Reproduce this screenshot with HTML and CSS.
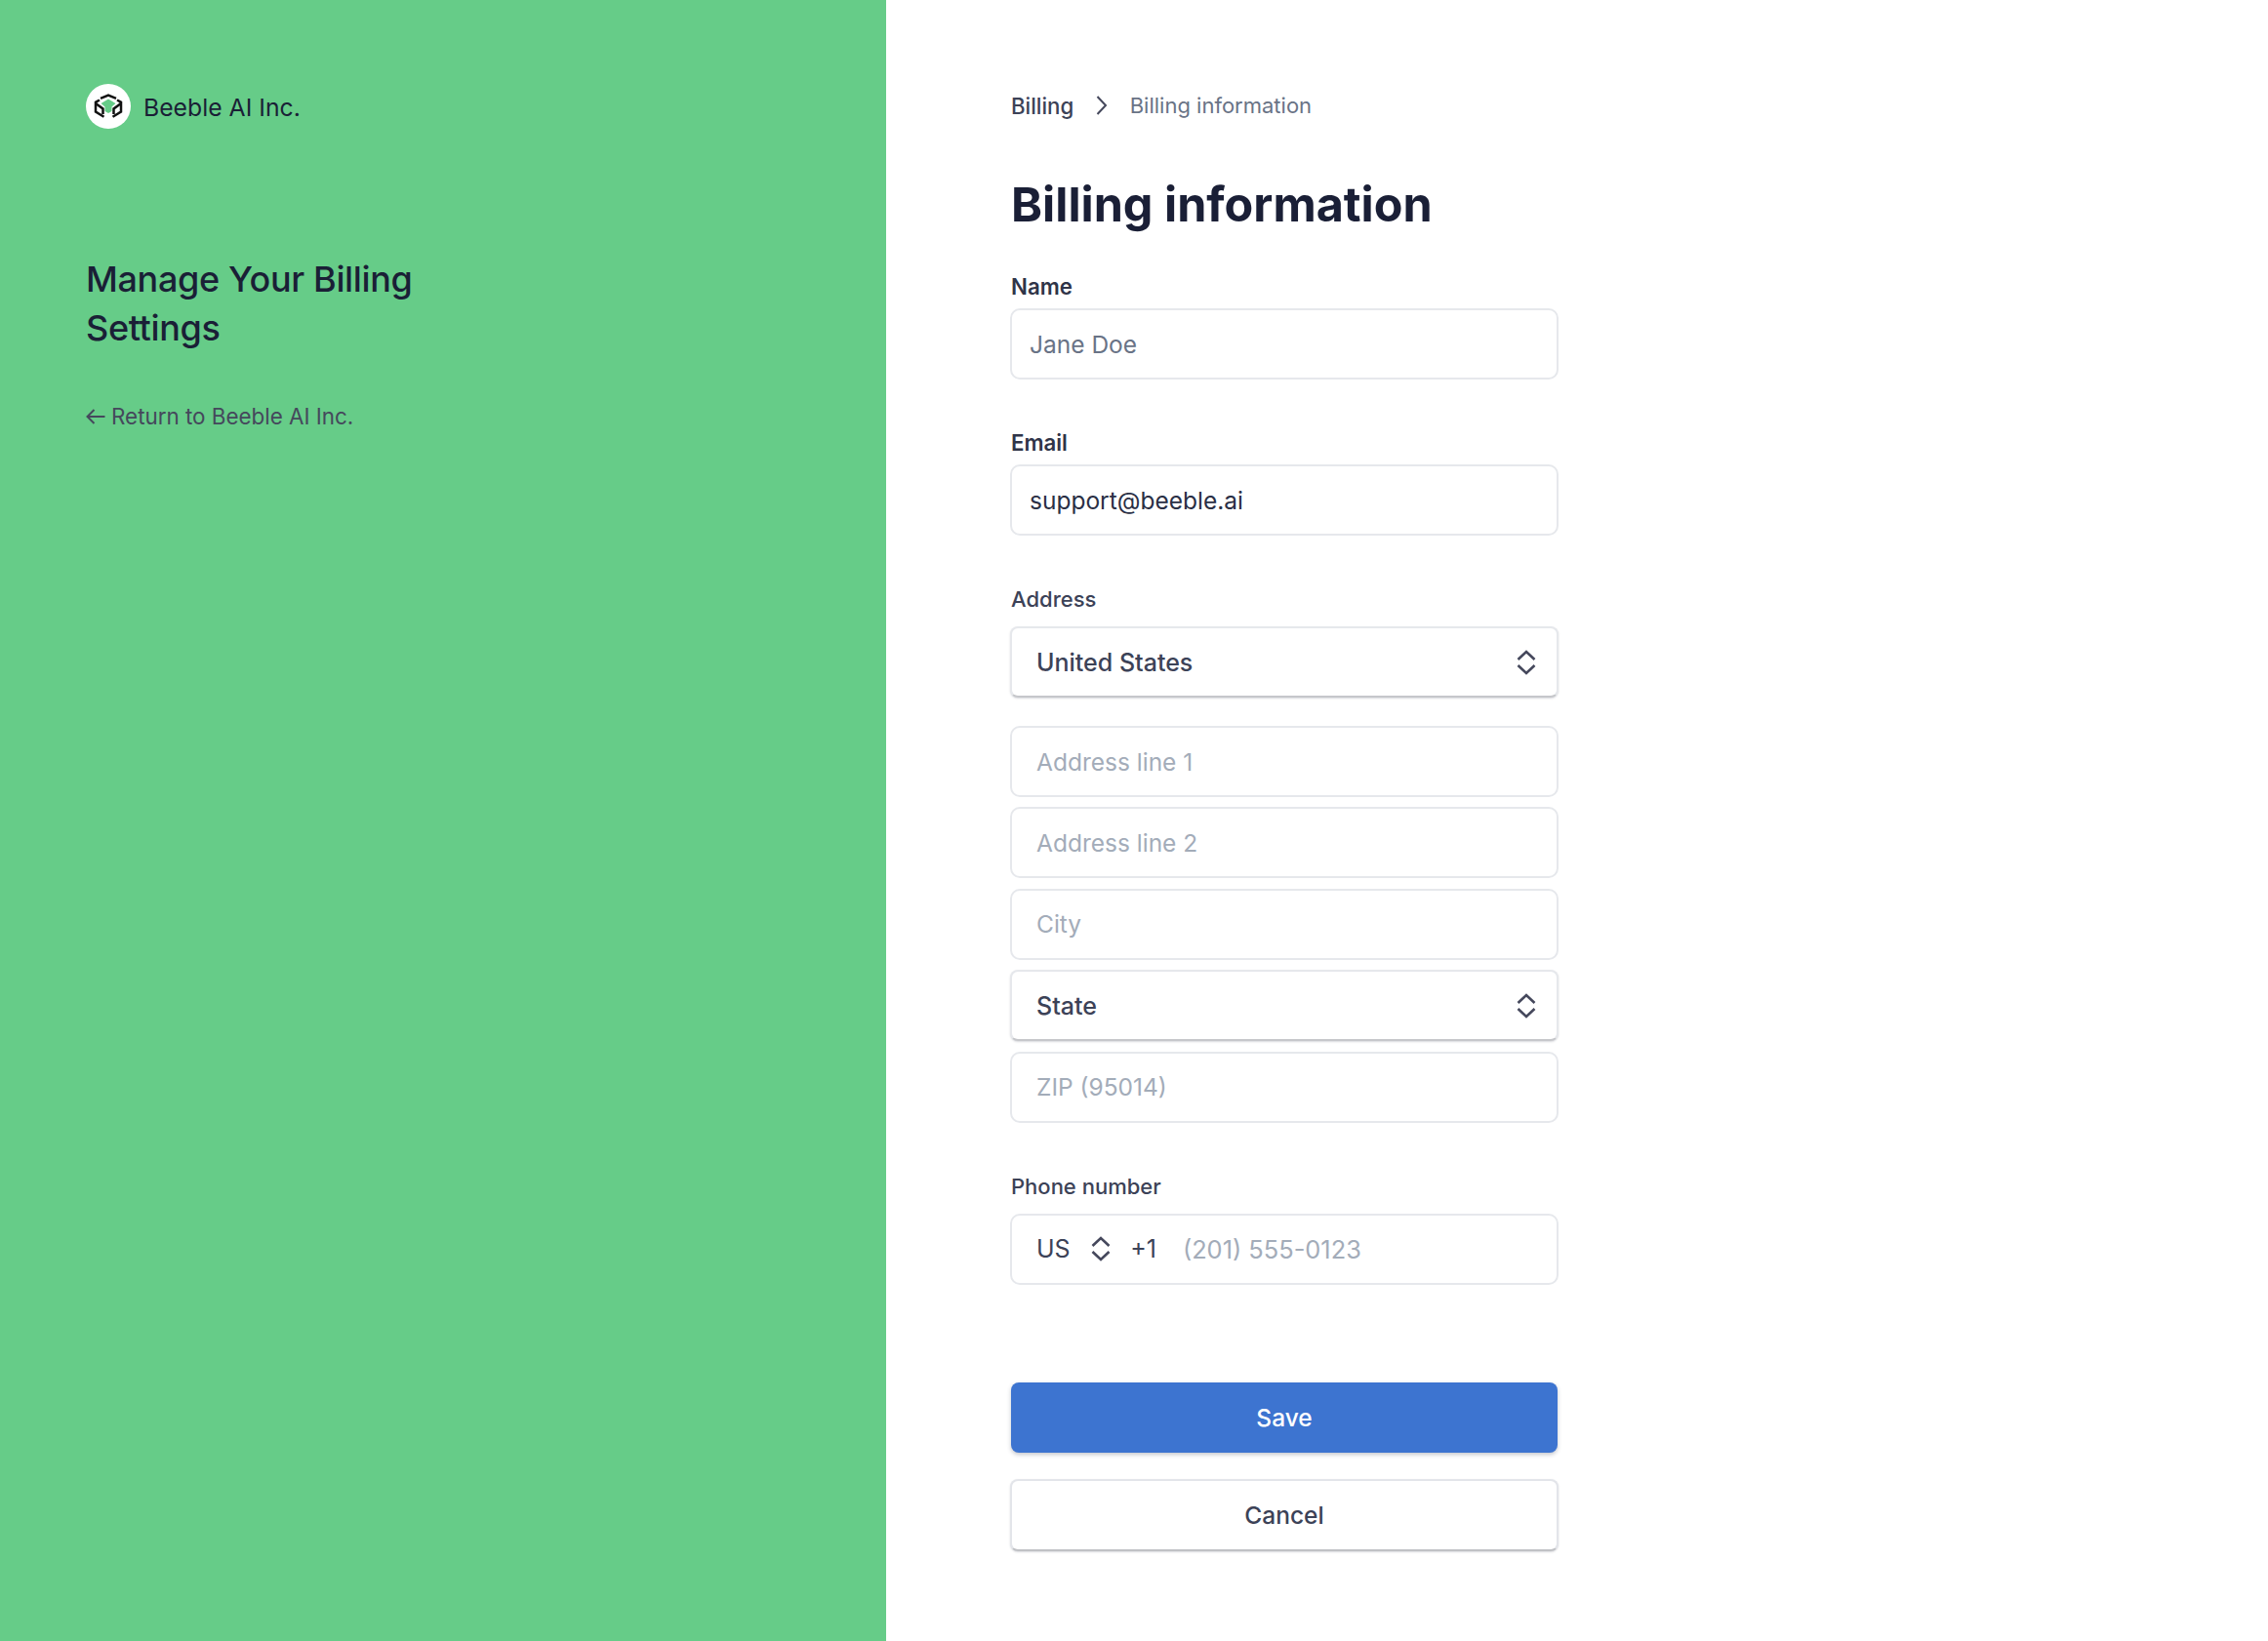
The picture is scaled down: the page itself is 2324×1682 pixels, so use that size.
FILE: index.html
```html
<!DOCTYPE html>
<html lang="en">
<head>
<meta charset="utf-8">
<title>Billing information</title>
<link rel="stylesheet" href="styles.css">
</head>
<body>
<div class="page">
  <aside class="side">
    <div class="brand">
      <span class="logo">
        <svg width="46" height="46" viewBox="0 0 46 46" fill="none">
          <path d="M23 15.500 30.500 20 26.500 23.500 26.500 28 23 30 19.500 28 19.500 23.500 15.500 20Z" fill="#66cc88"/>
          <path d="M15 14.800 23 11.500l8 3.300" stroke="#111" stroke-width="2.500"/>
          <path d="M14 16.500 10 18.800V28.500L18.500 33.800" stroke="#111" stroke-width="2.500"/>
          <path d="M10 20 17.500 25.500V31" stroke="#111" stroke-width="2.500"/>
          <path d="M32 16.500 36 18.800V28.500L27.500 33.800" stroke="#111" stroke-width="2.500"/>
          <path d="M36 20 28.500 25.500V31" stroke="#111" stroke-width="2.500"/>
        </svg>
      </span>
      <span class="brand-name">Beeble AI Inc.</span>
    </div>
    <h2 class="tagline">Manage Your Billing Settings</h2>
    <a class="back" href="#">
      <svg class="back-icon" width="20" height="20" viewBox="0 0 20 20" fill="none"><path d="M8.500 3 1.500 10l7 7M1.500 10h18" stroke="#45485c" stroke-width="2"/></svg>
      Return to Beeble AI Inc.
    </a>
  </aside>
  <main class="main">
    <nav class="crumbs">
      <a class="crumb-link" href="#">Billing</a>
      <svg class="crumb-sep" width="14" height="22" viewBox="0 0 14 22" fill="none"><path d="M2.500 2 11 11l-8.500 9" stroke="#45485c" stroke-width="2"/></svg>
      <span class="crumb-current">Billing information</span>
    </nav>
    <h1 class="title">Billing information</h1>
    <form class="form">
      <div class="field">
        <div class="label label-strong">Name</div>
        <div class="box value-muted pad-s">Jane Doe</div>
      </div>
      <div class="field">
        <div class="label label-strong">Email</div>
        <div class="box value pad-s">support@beeble.ai</div>
      </div>
      <div class="field field-address">
        <div class="label label-address">Address</div>
        <div class="box select value">United States
          <svg class="updown" width="20" height="26" viewBox="0 0 20 26" fill="none"><path d="M1.500 10 10 2l8.500 8M1.500 16l8.500 8 8.500-8" stroke="#45485c" stroke-width="2.600"/></svg>
        </div>
        <div class="stack">
          <div class="box placeholder">Address line 1</div>
          <div class="box placeholder">Address line 2</div>
          <div class="box placeholder">City</div>
          <div class="box select value">State
            <svg class="updown" width="20" height="26" viewBox="0 0 20 26" fill="none"><path d="M1.500 10 10 2l8.500 8M1.500 16l8.500 8 8.500-8" stroke="#45485c" stroke-width="2.600"/></svg>
          </div>
          <div class="box placeholder">ZIP (95014)</div>
        </div>
      </div>
      <div class="field">
        <div class="label label-address">Phone number</div>
        <div class="box phone">
          <span class="value">US</span>
          <svg class="updown phone-icon" width="20" height="26" viewBox="0 0 20 26" fill="none"><path d="M1.500 10 10 2l8.500 8M1.500 16l8.500 8 8.500-8" stroke="#45485c" stroke-width="2.600"/></svg>
          <span class="value dial">+1</span>
          <span class="phone-ph">(201) 555-0123</span>
        </div>
      </div>
      <div class="actions">
        <button class="btn btn-save" type="button">Save</button>
        <button class="btn btn-cancel" type="button">Cancel</button>
      </div>
    </form>
  </main>
</div>
</body>
</html>
```
FILE: styles.css
```css
* { box-sizing: border-box; }
html, body { margin: 0; padding: 0; }
body { font-family: Inter, "Liberation Sans", sans-serif; color: #1a1f36; background: #fff; }
.page { display: flex; height: 1682px; overflow: hidden; }
.side { width: 908px; flex: none; background: #66cc88; padding: 85.500px 88px 0; }
.brand { display: flex; align-items: center; gap: 13px; height: 46px; }
.logo { width: 46px; height: 46px; border-radius: 50%; background: #fff; display: flex; align-items: center; justify-content: center; }
.brand-name { font-size: 24.75px; font-weight: 400; color: #1a1f36; line-height: 30px; padding-top: 2px; }
.tagline { margin: 129px 0 0; width: 400px; font-size: 36px; font-weight: 500; line-height: 50.5px; color: #1a1f36; letter-spacing: -0.35px; }
.back { display: flex; align-items: center; gap: 6px; margin-top: 50.500px; font-size: 22.4px; font-weight: 400; line-height: 30px; color: #45485c; text-decoration: none; }
.main { flex: 1; min-width: 0; padding: 93px 0 0 128px; }
.crumbs { display: flex; align-items: center; height: 30px; font-size: 22.25px; }
.crumb-link { color: #3c4257; font-weight: 500; text-decoration: none; }
.crumb-sep { margin: 0 21.500px 0 22px; }
.crumb-current { color: #697386; font-size: 22px; }
.title { margin: 55px 0 0; font-size: 48.5px; font-weight: 700; line-height: 64px; color: #1a1f36; }
.form { width: 562px; margin-left: -1px; margin-top: 37px; }
.field { margin-bottom: 50px; }
.label { font-size: 22.25px; line-height: 30px; margin-bottom: 7px; color: #2f3448; padding-left: 1px; }
.label-strong { font-weight: 600; }
.label-address { font-weight: 500; color: #3c4257; margin-bottom: 13px; font-size: 22px; }
.box { height: 73px; border: 2px solid #e6e8ec; border-radius: 10px; background: #fff; display: flex; align-items: center; padding: 0 25px; font-size: 24.5px; }
.pad-s { padding: 0 18px; }
.value { color: #3c4257; font-weight: 500; font-size: 25px; }
.box.pad-s.value { font-weight: 400; font-size: 24.5px; color: #2a2f45; }
.value-muted { color: #697386; }
.placeholder { color: #a3acb9; }
.select { justify-content: space-between; border-radius: 8px; border-bottom-color: #c6c7cb; box-shadow: 0 1px 2px rgba(60, 66, 87, 0.2); padding-right: 21px; }
.stack { display: flex; flex-direction: column; gap: 10.4px; }
.select + .stack { margin-top: 29px; }
.phone .value { font-weight: 400; font-size: 25px; }
.phone-icon { margin: 0 20px 0 21.500px; }
.dial { margin-right: 27px; }
.phone-ph { color: #a3acb9; font-size: 25.4px; }
.actions { display: flex; flex-direction: column; gap: 27px; margin-top: 100px; }
.btn { height: 74px; width: 100%; border-radius: 8px; font: 500 24.5px Inter, "Liberation Sans", sans-serif; cursor: pointer; }
.btn-save { background: #3d74d0; color: #fff; border: 0; height: 72px; width: 560px; margin: 0 1px; box-shadow: 0 2px 4px rgba(60, 66, 87, 0.3); }
.btn-cancel { background: #fff; color: #3c4257; border: 2px solid #e3e5ea; border-bottom-color: #c0c1c5; box-shadow: 0 1px 2px rgba(60, 66, 87, 0.2); }
```
